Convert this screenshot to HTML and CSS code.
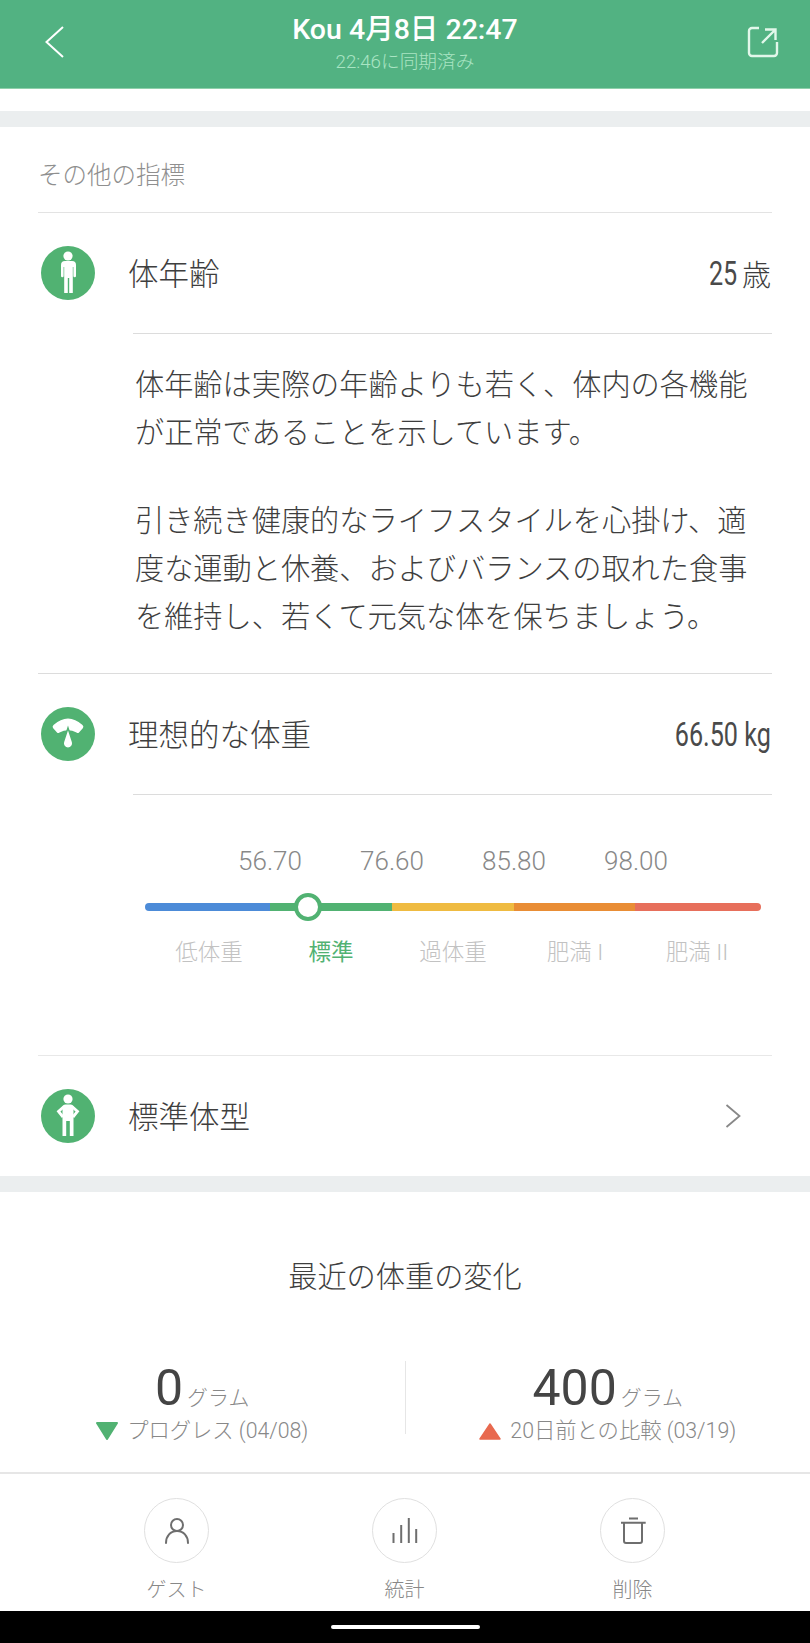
FILE: index.html
```html
<!DOCTYPE html>
<html lang="ja">
<head>
    <meta charset="UTF-8">
    <title>体重の詳細</title>
    <link rel="stylesheet" href="styles.css">
</head>
<body>
<div class="screen">
    <header class="topbar">
        <svg class="top-back" width="30" height="34" viewBox="0 0 30 34"><path d="M23 2 6.500 17 23 32" fill="none" stroke="#fff" stroke-width="2"/></svg>
        <div class="top-title">
            <div class="top-name">Kou 4月8日 22:47</div>
            <div class="top-sync">22:46に同期済み</div>
        </div>
        <svg class="top-share" width="32" height="32" viewBox="0 0 32 32"><path d="M12 2H5a3 3 0 0 0-3 3v22a3 3 0 0 0 3 3h22a3 3 0 0 0 3-3V16" fill="none" stroke="#e2f7ea" stroke-width="2.400"/><path d="M15 17 28 4M18 3.500h10.500V14" fill="none" stroke="#e2f7ea" stroke-width="2.400"/></svg>
    </header>

    <main class="content">
        <div class="gap-white"></div>
        <div class="band"></div>

        <section class="metrics">
            <h3 class="metrics-title">その他の指標</h3>

            <div class="row">
                <svg class="row-icon" width="54" height="54" viewBox="0 0 54 54"><circle cx="27" cy="27" r="27" fill="#51b272"/><circle cx="27" cy="10" r="4.600" fill="#fff"/><path d="M23 15h8a4 4 0 0 1 4 4v11a1.300 1.300 0 0 1-2.600 0v-9h-.6v26h-3.600V32h-1.400v15h-3.600V21h-.6v9a1.300 1.300 0 0 1-2.600 0V19a4 4 0 0 1 4-4z" fill="#fff"/></svg>
                <span class="row-label">体年齢</span>
                <span class="cond">25</span><span class="value-unit">歳</span>
            </div>
            <div class="detail">
                <p>体年齢は実際の年齢よりも若く、体内の各機能<br>が正常であることを示しています。</p>
                <p>引き続き健康的なライフスタイルを心掛け、適<br>度な運動と休養、およびバランスの取れた食事<br>を維持し、若くて元気な体を保ちましょう。</p>
            </div>

            <div class="row">
                <svg class="row-icon" width="54" height="54" viewBox="0 0 54 54"><circle cx="27" cy="27" r="27" fill="#51b272"/><path d="M12.500 18Q27 5 41.500 18Q43 19.500 42 21L38 25.500Q37 26.500 35.500 25.500Q27 21 18.500 25.500Q17 26.500 16 25.500L12 21Q11 19.500 12.500 18Z" fill="#fff"/><path d="M27 21 31.600 35a4.800 4.800 0 1 1-9.200 0Z" fill="#fff" stroke="#51b272" stroke-width="1.500"/></svg>
                <span class="row-label">理想的な体重</span>
                <span class="cond">66.50 kg</span>
            </div>
            <div class="scale">
                <div class="scale-nums">
                    <span>56.70</span><span>76.60</span><span>85.80</span><span>98.00</span>
                </div>
                <div class="scale-bar">
                    <i class="seg seg-blue"></i><i class="seg seg-green"></i><i class="seg seg-yellow"></i><i class="seg seg-orange"></i><i class="seg seg-red"></i>
                    <b class="thumb"></b>
                </div>
                <div class="scale-labels">
                    <span>低体重</span><span class="on">標準</span><span>過体重</span><span>肥満 I</span><span>肥満 II</span>
                </div>
            </div>

            <div class="row row-last">
                <svg class="row-icon" width="54" height="54" viewBox="0 0 54 54"><circle cx="27" cy="27" r="27" fill="#51b272"/><circle cx="27" cy="10" r="4.600" fill="#fff"/><path d="M24.500 15.500h5a3 3 0 0 1 3 3V47h-3.700V32h-3.600v15h-3.700V18.500a3 3 0 0 1 3-3z" fill="#fff"/><path d="M23 17.500 17.500 22.500 22 28M31 17.500 36.500 22.500 32 28" fill="none" stroke="#fff" stroke-width="2.800"/></svg>
                <span class="row-label">標準体型</span>
                <svg class="row-arrow" width="16" height="26" viewBox="0 0 16 26"><path d="m1.500 2 13 11-13 11" fill="none" stroke="#888" stroke-width="1.800"/></svg>
            </div>
        </section>

        <div class="band"></div>

        <section class="recent">
            <h3 class="recent-title">最近の体重の変化</h3>
            <div class="stats">
                <div class="stat">
                    <div class="stat-main"><span class="stat-num">0</span> <span class="stat-unit">グラム</span></div>
                    <div class="stat-sub"><svg width="22" height="18" viewBox="0 0 22 18"><path d="M1 1h20L11 17z" fill="#51b272" stroke="#51b272" stroke-width="2" stroke-linejoin="round"/></svg>プログレス (04/08)</div>
                </div>
                <div class="stat">
                    <div class="stat-main"><span class="stat-num">400</span> <span class="stat-unit">グラム</span></div>
                    <div class="stat-sub"><svg width="22" height="17" viewBox="0 0 22 17"><path d="M11 1l10 15H1z" fill="#e8694f" stroke="#e8694f" stroke-width="1.500" stroke-linejoin="round"/></svg>20日前との比較 (03/19)</div>
                </div>
            </div>
        </section>
    </main>

    <nav class="tabs">
        <div class="tab">
            <span class="tab-circle"><svg width="28" height="28" viewBox="0 0 28 28"><circle cx="14" cy="8" r="6" fill="none" stroke="#6e6e6e" stroke-width="2"/><path d="M3 26c0-7 4.500-12 11-12s11 5 11 12" fill="none" stroke="#6e6e6e" stroke-width="2" stroke-linecap="round"/></svg></span>
            <span class="tab-label">ゲスト</span>
        </div>
        <div class="tab">
            <span class="tab-circle"><svg width="28" height="28" viewBox="0 0 28 28"><path d="M2.500 26V16M10.200 26V8M17.800 26V1M25.200 26V12" fill="none" stroke="#6e6e6e" stroke-width="2"/></svg></span>
            <span class="tab-label">統計</span>
        </div>
        <div class="tab">
            <span class="tab-circle"><svg width="28" height="28" viewBox="0 0 28 28"><path d="M2 5.700h24.700M10 1.500h9M5 6v18a2 2 0 0 0 2 2h14a2 2 0 0 0 2-2V6" fill="none" stroke="#6e6e6e" stroke-width="2"/></svg></span>
            <span class="tab-label">削除</span>
        </div>
    </nav>

    <div class="sysnav"><span class="home-pill"></span></div>
</div>
</body>
</html>
```

FILE: styles.css
```css
* {
    box-sizing: border-box;
}
html, body {
    margin: 0;
    padding: 0;
    background: #fff;
}
body {
    font-family: "Roboto", "Noto Sans CJK JP", sans-serif;
    font-weight: 300;
    color: #3e3e3e;
}
.screen {
    width: 810px;
    height: 1643px;
    display: flex;
    flex-direction: column;
    overflow: hidden;
}
h3 {
    margin: 0;
    font-weight: 300;
}

.topbar {
    height: 89px;
    flex: none;
    background: #52b282;
    border-bottom: 1px solid #8fd0ab;
    padding: 0 31px;
    display: grid;
    grid-template-columns: 1fr auto 1fr;
    align-items: center;
}
.top-back {
    margin: 0 0 4px 9px;
}
.top-share {
    justify-self: end;
    margin-bottom: 4px;
}
.top-title {
    text-align: center;
    color: #fff;
}
.top-name {
    font-size: 28.500px;
    font-weight: 500;
    line-height: 36px;
}
.top-sync {
    font-size: 18.700px;
    line-height: 29px;
    color: #a9e4c3;
}

.content {
    flex: 1;
    overflow: hidden;
}
.gap-white {
    height: 22px;
}
.band {
    height: 16px;
    background: #ebeeef;
}

.metrics {
    padding: 0 38px;
}
.metrics-title {
    height: 86px;
    padding-top: 32px;
    font-size: 24.500px;
    line-height: 34px;
    color: #8f8f8f;
    border-bottom: 1px solid #e3e3e3;
}
.row {
    height: 120px;
    display: flex;
    align-items: center;
    padding: 0 1px 0 3px;
}
.row-last {
    height: 121px;
    padding-right: 31px;
    border-top: 1px solid #e8e8e8;
}
.row-icon {
    flex: none;
}
.row-label {
    margin: 0 0 2px 33px;
    font-size: 30.500px;
    flex: 1;
}
.cond {
    display: inline-block;
    font-size: 34px;
    font-weight: 400;
    color: #4a4a4a;
    transform: scaleX(.74);
    transform-origin: right center;
}
.value-unit {
    margin-left: 5px;
    font-family: "Noto Sans CJK JP", sans-serif;
    font-size: 29px;
}
.row-arrow {
    flex: none;
}

.detail {
    margin-left: 95px;
    padding: 27px 0 32px 2px;
    border-top: 1px solid #dcdcdc;
    font-size: 29.200px;
    line-height: 48px;
}
.detail p {
    margin: 0 0 40px;
}
.detail p:last-child {
    margin: 0;
}
.detail + .row {
    height: 121px;
    border-top: 1px solid #dcdcdc;
}

.scale {
    margin-left: 95px;
    height: 261px;
    border-top: 1px solid #dcdcdc;
    padding: 49px 11px 0 12px;
}
.scale-nums {
    display: grid;
    grid-template-columns: repeat(4, 122px);
    padding-left: 64px;
    font-size: 26px;
    line-height: 34px;
    color: #888;
    text-align: center;
}
.scale-bar {
    display: grid;
    grid-template-columns: 125px 122px 122px 121px 1fr;
    height: 8px;
    margin-top: 25px;
    position: relative;
}
.seg {
    display: block;
}
.seg-blue {
    background: #4c8bd8;
    border-radius: 4px 0 0 4px;
}
.seg-green {
    background: #51b272;
}
.seg-yellow {
    background: #efbb41;
}
.seg-orange {
    background: #e98d35;
}
.seg-red {
    background: #e76f5b;
    border-radius: 0 4px 4px 0;
}
.thumb {
    position: absolute;
    left: 149px;
    top: -10px;
    width: 28px;
    height: 28px;
    border-radius: 50%;
    background: #fff;
    border: 4px solid #51b272;
}
.scale-labels {
    display: grid;
    grid-template-columns: repeat(5, 122px);
    margin: 25px 0 0 3px;
    font-size: 22.500px;
    line-height: 32px;
    color: #c2c2c2;
    text-align: center;
}
.scale-labels .on {
    color: #51b272;
    font-weight: 400;
}

.recent {
    text-align: center;
}
.recent-title {
    padding-top: 65px;
    font-size: 29.200px;
    line-height: 40px;
}
.stats {
    display: flex;
    margin-top: 64px;
}
.stat {
    flex: 1;
    height: 73px;
}
.stat + .stat {
    border-left: 1px solid #e6e6e6;
}
.stat-main {
    line-height: 54px;
    height: 55px;
}
.stat-num {
    font-size: 50px;
    font-weight: 400;
    color: #444;
}
.stat-unit {
    font-size: 21px;
    color: #888;
}
.stat-sub {
    font-size: 21.300px;
    line-height: 30px;
    color: #888;
    display: flex;
    align-items: center;
    justify-content: center;
    gap: 9px;
}

.tabs {
    flex: none;
    height: 139px;
    border-top: 2px solid #e6e6e6;
    padding: 24px 1px 0 0;
    display: flex;
    justify-content: center;
}
.tab {
    width: 228px;
    display: flex;
    flex-direction: column;
    align-items: center;
}
.tab-circle {
    width: 65px;
    height: 65px;
    border: 1.500px solid #e0e0e0;
    border-radius: 50%;
    display: flex;
    align-items: center;
    justify-content: center;
}
.tab-label {
    margin-top: 13px;
    font-size: 20px;
    line-height: 28px;
    color: #888;
}

.sysnav {
    flex: none;
    height: 32px;
    background: #000;
    display: flex;
    align-items: center;
    justify-content: center;
}
.home-pill {
    width: 149px;
    height: 4.500px;
    border-radius: 2px;
    background: #fff;
}
```
